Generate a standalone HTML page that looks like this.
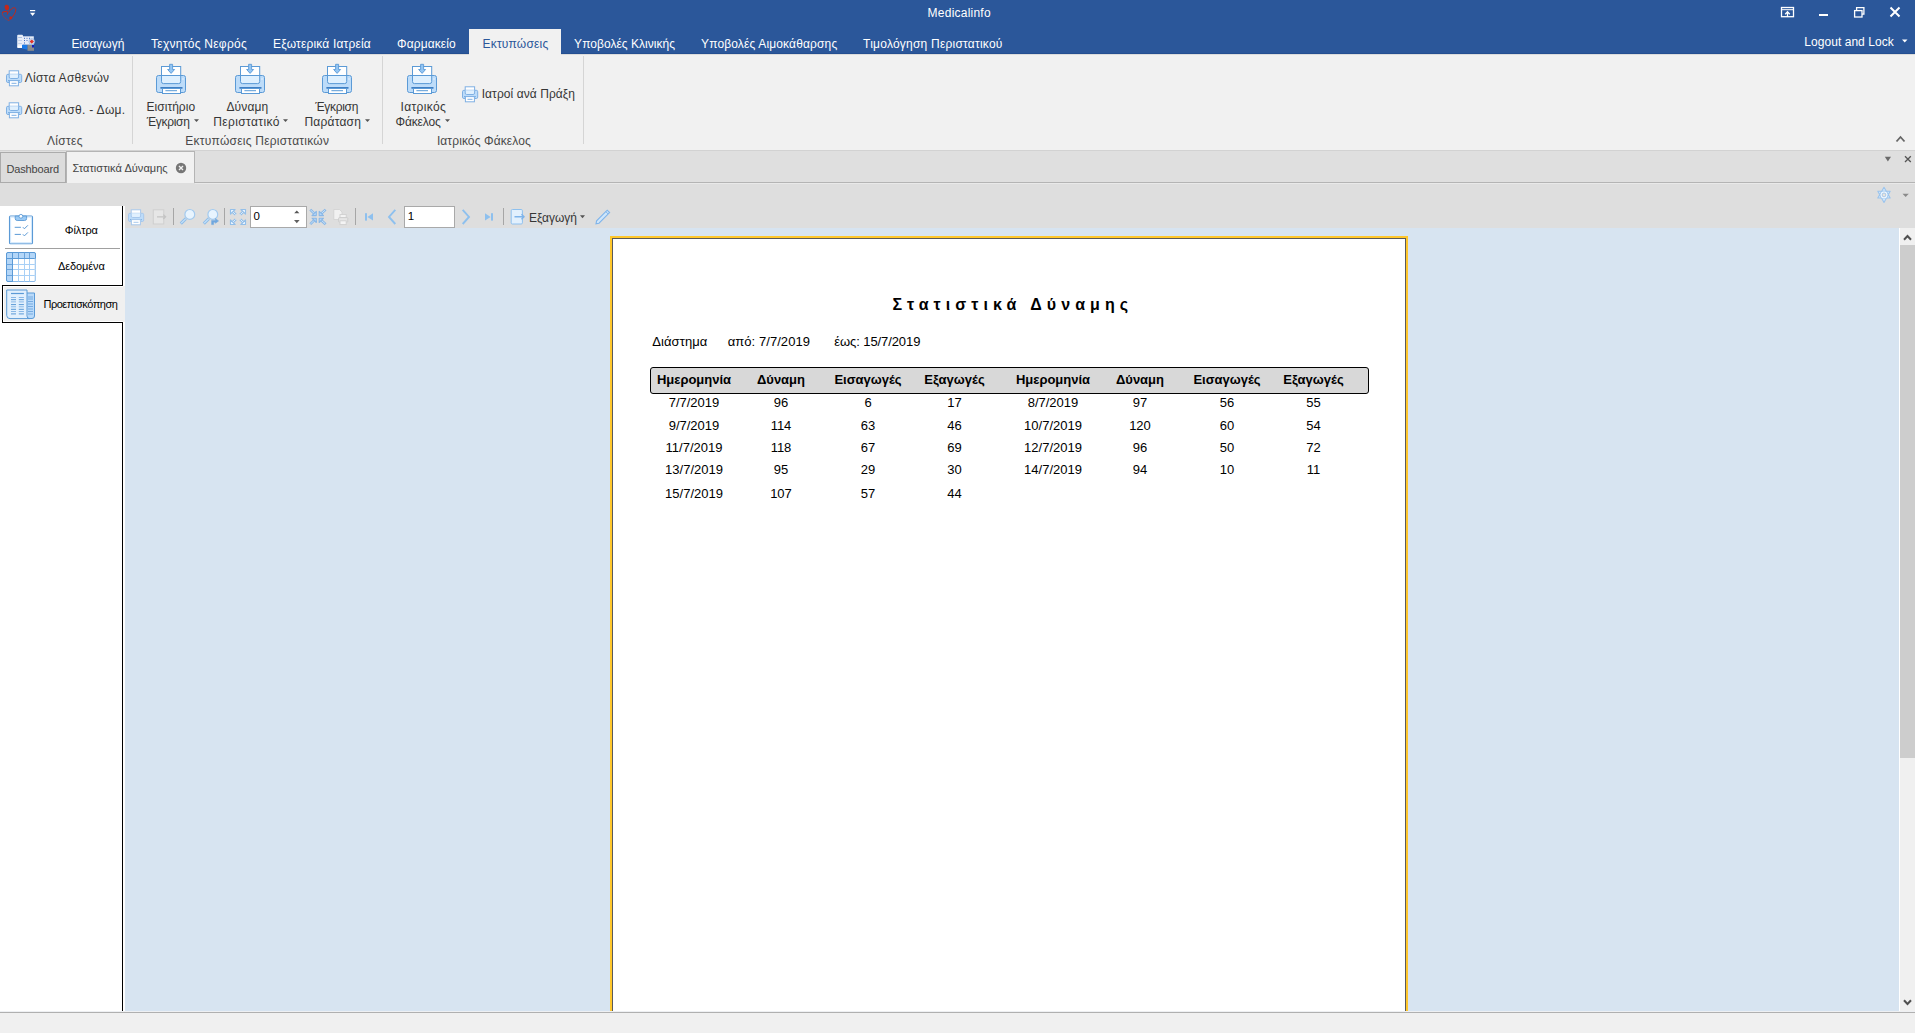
<!DOCTYPE html>
<html><head><meta charset="utf-8">
<style>
*{margin:0;padding:0;box-sizing:border-box}
html,body{width:1915px;height:1033px;overflow:hidden;background:#f0f0f0;font-family:"Liberation Sans",sans-serif;position:relative}
.a{position:absolute}
.t{position:absolute;white-space:pre;line-height:1}
svg{position:absolute;overflow:visible}
</style></head><body>
<!-- title bar -->
<div class="a" style="left:0;top:0;width:1915px;height:54px;background:#2b579a"></div>
<div class="a" style="left:0;top:53px;width:469px;height:1px;background:#244f91"></div>
<div class="a" style="left:561px;top:53px;width:1354px;height:1px;background:#244f91"></div>
<div class="a" style="left:469px;top:29px;width:92px;height:26px;background:#f1f1f1"></div>
<!-- ribbon -->
<div class="a" style="left:0;top:54px;width:1915px;height:96px;background:#f1f1f1"></div>
<div class="a" style="left:0;top:54px;width:469px;height:1px;background:#dcdcdc"></div>
<div class="a" style="left:561px;top:54px;width:1354px;height:1px;background:#dcdcdc"></div>
<div class="a" style="left:132px;top:56px;width:1px;height:88px;background:#d5d5d5"></div>
<div class="a" style="left:382px;top:56px;width:1px;height:88px;background:#d5d5d5"></div>
<div class="a" style="left:583px;top:56px;width:1px;height:88px;background:#d5d5d5"></div>
<div class="a" style="left:0;top:150px;width:1915px;height:1px;background:#d2d2d2"></div>
<!-- doc tab bar -->
<div class="a" style="left:0;top:151px;width:1915px;height:32px;background:#dfdfdf"></div>
<div class="a" style="left:0;top:182px;width:1915px;height:1px;background:#b4b4b4"></div>
<div class="a" style="left:0;top:152px;width:66px;height:31px;background:#dcdcdc;border:1px solid #ababab"></div>
<div class="a" style="left:66px;top:151px;width:129px;height:32px;background:#f1f1f1;border:1px solid #b4b4b4;border-bottom:none"></div>
<!-- band -->
<div class="a" style="left:0;top:183px;width:1915px;height:45px;background:#dedede"></div>
<div class="a" style="left:195px;top:183px;width:1720px;height:1px;background:#e9e9e9"></div>
<!-- left panel -->
<div class="a" style="left:0;top:206px;width:125px;height:806px;background:#fff"></div>
<div class="a" style="left:122px;top:206px;width:1px;height:79px;background:#000"></div>
<div class="a" style="left:122px;top:322px;width:1px;height:690px;background:#000"></div>
<div class="a" style="left:5px;top:248px;width:115px;height:1px;background:#a0a0a0"></div>
<div class="a" style="left:2px;top:285px;width:121px;height:38px;background:#f0f0f0;border:1px solid #000;border-right:none;box-shadow:inset 1px 1px 0 #fff,inset 0 -1px 0 #fff"></div>
<div class="a" style="left:123px;top:286px;width:2px;height:36px;background:#f0f0f0"></div>
<!-- preview area -->
<div class="a" style="left:125px;top:228px;width:1774px;height:783px;background:#d7e4f1"></div>
<div class="a" style="left:1899px;top:228px;width:1px;height:784px;background:#ffffff"></div>
<div class="a" style="left:1900px;top:228px;width:15px;height:784px;background:#f0f0f0"></div>
<div class="a" style="left:1900px;top:245px;width:15px;height:513px;background:#cdcdcd"></div>
<!-- page -->
<div class="a" style="left:610px;top:236px;width:798px;height:776px;background:#ffc72c"></div>
<div class="a" style="left:612px;top:238px;width:794px;height:774px;background:#fff;border:1px solid #5a5a5a;border-bottom:none"></div>
<div class="a" style="left:650px;top:367px;width:719px;height:27px;background:#d8d8d8;border:1px solid #000;border-radius:3px"></div>
<!-- status -->
<div class="a" style="left:0;top:1011px;width:1915px;height:1px;background:#eef0f3"></div>
<div class="a" style="left:0;top:1012px;width:1915px;height:1px;background:#b0b0b0"></div>
<div class="a" style="left:0;top:1013px;width:1915px;height:20px;background:#f0f0f0"></div>
<!-- spin box / page box -->
<div class="a" style="left:250px;top:206px;width:57px;height:22px;background:#fff;border:1px solid #a9a9a9"></div>
<div class="a" style="left:404px;top:206px;width:51px;height:22px;background:#fff;border:1px solid #a9a9a9"></div>
<svg style="left:0px;top:0px" width="20" height="24" viewBox="0 0 20 24">
<ellipse cx="6.9" cy="7.5" rx="2.2" ry="2.7" fill="#c0281c" transform="rotate(-12 6.9 7.5)"/>
<path d="M2.3 13.2 C2.2 11.8 4.2 11.2 7.2 11.4 M7.4 11.6 L7.4 14.6" fill="none" stroke="#c0281c" stroke-width="1.1"/>
<path d="M8.6 12.6 C10 9.8 12.6 7.4 14.6 7.6 C16.2 7.9 16 10.6 15 12.8 C13.8 15.4 11.6 18.2 9.2 20.4" fill="none" stroke="#c0281c" stroke-width="1"/>
<path d="M2.3 13.2 C2.4 15.6 4.2 17.6 6.2 19 C7.2 19.8 8.2 20.4 9.2 20.6" fill="none" stroke="#b8322a" stroke-width="0.9" opacity="0.75"/>
<circle cx="10.7" cy="17.7" r="1.5" fill="#c0281c"/>
</svg>
<svg style="left:29px;top:9px" width="8" height="8" viewBox="0 0 8 8"><rect x="1" y="1" width="5.2" height="1.2" fill="#fff"/><path d="M1 3.8 H6.2 L3.6 7 Z" fill="#fff"/></svg>
<svg style="left:17px;top:34px" width="18" height="18" viewBox="0 0 18 18">
<rect x="0.2" y="0.8" width="5.8" height="13.2" rx="1" fill="#e8eef8"/>
<rect x="1.2" y="3" width="3.8" height="0.8" fill="#9fb6dc"/><rect x="1.2" y="6" width="3.8" height="0.8" fill="#b8c8e6"/><rect x="1.2" y="9" width="3.8" height="0.8" fill="#b8c8e6"/>
<rect x="0.6" y="11.6" width="4.6" height="2.2" fill="#fff"/>
<rect x="5.8" y="2.3" width="11" height="8.4" fill="#e6ecf8"/>
<rect x="7" y="3.8" width="1" height="1" fill="#3a6bc0"/><rect x="9" y="3.8" width="2" height="1" fill="#9ab0dc"/><rect x="12" y="3.8" width="1" height="1" fill="#3a6bc0"/>
<rect x="7" y="6" width="1" height="1" fill="#3a6bc0"/><rect x="9" y="6" width="2" height="1" fill="#9ab0dc"/>
<rect x="7" y="8.5" width="1" height="1" fill="#3a6bc0"/>
<circle cx="14.8" cy="7.6" r="2.9" fill="#dbe8f8" stroke="#7aa6de" stroke-width="0.6"/><path d="M14.8 5.4 L17 7.6 L14.8 9.8 L12.6 7.6Z" fill="#e0342b"/>
<path d="M5 10.7 L10.5 10.9 L10.5 15.8 L5 14.5 Z" fill="#1a7ae8"/>
<rect x="10.5" y="11" width="6.5" height="5.8" fill="#8c8c8c"/><rect x="15" y="11" width="2" height="2.5" fill="#1020c0"/>
</svg>
<svg style="left:1780px;top:6px" width="16" height="13" viewBox="0 0 16 13"><rect x="1.5" y="1.5" width="12" height="9.2" fill="none" stroke="#fff" stroke-width="1.3"/><line x1="1.5" y1="3.7" x2="13.5" y2="3.7" stroke="#fff" stroke-width="1"/><path d="M7.5 11 V6.3 M5.2 8.3 L7.5 5.8 L9.8 8.3" fill="none" stroke="#fff" stroke-width="1.3"/></svg>
<div class="a" style="left:1819px;top:14px;width:9px;height:2px;background:#fff"></div>
<svg style="left:1853px;top:6px" width="13" height="13" viewBox="0 0 13 13"><rect x="1.6" y="4.6" width="7.4" height="6.4" fill="none" stroke="#fff" stroke-width="1.3"/><path d="M3.6 4.6 V1.6 H10.9 V8.2 H9" fill="none" stroke="#fff" stroke-width="1.3"/></svg>
<svg style="left:1889px;top:6px" width="13" height="13" viewBox="0 0 13 13"><path d="M1.5 1.5 L10.5 10.5 M10.5 1.5 L1.5 10.5" stroke="#fff" stroke-width="2"/></svg>
<svg style="left:1901px;top:39px" width="8" height="5" viewBox="0 0 8 5"><path d="M1 0.5 H6.5 L3.75 3.5Z" fill="#fff"/></svg>
<svg style="left:6px;top:70px" width="17" height="17" viewBox="0 0 17 17">
<rect x="3.2" y="0.8" width="9.4" height="4.6" fill="#fff" stroke="#7fb0e3"/>
<rect x="0.5" y="4.3" width="15.2" height="8.2" rx="1.4" fill="#bddcfa" stroke="#7fb0e3"/>
<path d="M3.2 4.3 V7 a1.5 1.5 0 0 0 1.5 1.5 H11.1 a1.5 1.5 0 0 0 1.5 -1.5 V4.3" fill="#e0f0fe" stroke="#7fb0e3"/>
<rect x="2" y="10.2" width="11.8" height="1" fill="#6aa3dc"/>
<rect x="3.4" y="10.6" width="9" height="5.2" fill="#fff" stroke="#7fb0e3"/>
<line x1="5.5" y1="13.3" x2="10.5" y2="13.3" stroke="#7fb0e3"/>
</svg>
<svg style="left:6px;top:102px" width="17" height="17" viewBox="0 0 17 17">
<rect x="3.2" y="0.8" width="9.4" height="4.6" fill="#fff" stroke="#7fb0e3"/>
<rect x="0.5" y="4.3" width="15.2" height="8.2" rx="1.4" fill="#bddcfa" stroke="#7fb0e3"/>
<path d="M3.2 4.3 V7 a1.5 1.5 0 0 0 1.5 1.5 H11.1 a1.5 1.5 0 0 0 1.5 -1.5 V4.3" fill="#e0f0fe" stroke="#7fb0e3"/>
<rect x="2" y="10.2" width="11.8" height="1" fill="#6aa3dc"/>
<rect x="3.4" y="10.6" width="9" height="5.2" fill="#fff" stroke="#7fb0e3"/>
<line x1="5.5" y1="13.3" x2="10.5" y2="13.3" stroke="#7fb0e3"/>
</svg>
<svg style="left:462px;top:86px" width="17" height="17" viewBox="0 0 17 17">
<rect x="3.2" y="0.8" width="9.4" height="4.6" fill="#fff" stroke="#7fb0e3"/>
<rect x="0.5" y="4.3" width="15.2" height="8.2" rx="1.4" fill="#bddcfa" stroke="#7fb0e3"/>
<path d="M3.2 4.3 V7 a1.5 1.5 0 0 0 1.5 1.5 H11.1 a1.5 1.5 0 0 0 1.5 -1.5 V4.3" fill="#e0f0fe" stroke="#7fb0e3"/>
<rect x="2" y="10.2" width="11.8" height="1" fill="#6aa3dc"/>
<rect x="3.4" y="10.6" width="9" height="5.2" fill="#fff" stroke="#7fb0e3"/>
<line x1="5.5" y1="13.3" x2="10.5" y2="13.3" stroke="#7fb0e3"/>
</svg>
<svg style="left:150px;top:58px" width="42" height="42" viewBox="0 0 42 42">
<rect x="6.5" y="17.5" width="29" height="17" rx="2" fill="#bddcf9" stroke="#5b9ad6"/>
<path d="M11.5 17.5 V23.6 a2 2 0 0 0 2 2 H28.7 a2 2 0 0 0 2 -2 V17.5" fill="#dff0fe" stroke="#5b9ad6"/>
<rect x="11.5" y="8.5" width="19.2" height="9" fill="#fff" stroke="#5b9ad6"/>
<path d="M19.6 6.3 H22.6 V11.5 H24.6 L21.1 15.4 L17.6 11.5 H19.6Z" fill="#94c6f4" stroke="#5b9ad6" stroke-width="0.9"/>
<rect x="10.2" y="29.1" width="22.5" height="1.7" rx="0.8" fill="#3f7fc4"/>
<rect x="12.5" y="30.5" width="18" height="5" fill="#fff" stroke="#5b9ad6"/>
<line x1="15.4" y1="32.7" x2="27" y2="32.7" stroke="#5b9ad6"/>
<circle cx="33" cy="21" r="0.8" fill="#e8f4ff"/>
</svg>
<svg style="left:229px;top:58px" width="42" height="42" viewBox="0 0 42 42">
<rect x="6.5" y="17.5" width="29" height="17" rx="2" fill="#bddcf9" stroke="#5b9ad6"/>
<path d="M11.5 17.5 V23.6 a2 2 0 0 0 2 2 H28.7 a2 2 0 0 0 2 -2 V17.5" fill="#dff0fe" stroke="#5b9ad6"/>
<rect x="11.5" y="8.5" width="19.2" height="9" fill="#fff" stroke="#5b9ad6"/>
<path d="M19.6 6.3 H22.6 V11.5 H24.6 L21.1 15.4 L17.6 11.5 H19.6Z" fill="#94c6f4" stroke="#5b9ad6" stroke-width="0.9"/>
<rect x="10.2" y="29.1" width="22.5" height="1.7" rx="0.8" fill="#3f7fc4"/>
<rect x="12.5" y="30.5" width="18" height="5" fill="#fff" stroke="#5b9ad6"/>
<line x1="15.4" y1="32.7" x2="27" y2="32.7" stroke="#5b9ad6"/>
<circle cx="33" cy="21" r="0.8" fill="#e8f4ff"/>
</svg>
<svg style="left:316px;top:58px" width="42" height="42" viewBox="0 0 42 42">
<rect x="6.5" y="17.5" width="29" height="17" rx="2" fill="#bddcf9" stroke="#5b9ad6"/>
<path d="M11.5 17.5 V23.6 a2 2 0 0 0 2 2 H28.7 a2 2 0 0 0 2 -2 V17.5" fill="#dff0fe" stroke="#5b9ad6"/>
<rect x="11.5" y="8.5" width="19.2" height="9" fill="#fff" stroke="#5b9ad6"/>
<path d="M19.6 6.3 H22.6 V11.5 H24.6 L21.1 15.4 L17.6 11.5 H19.6Z" fill="#94c6f4" stroke="#5b9ad6" stroke-width="0.9"/>
<rect x="10.2" y="29.1" width="22.5" height="1.7" rx="0.8" fill="#3f7fc4"/>
<rect x="12.5" y="30.5" width="18" height="5" fill="#fff" stroke="#5b9ad6"/>
<line x1="15.4" y1="32.7" x2="27" y2="32.7" stroke="#5b9ad6"/>
<circle cx="33" cy="21" r="0.8" fill="#e8f4ff"/>
</svg>
<svg style="left:401px;top:58px" width="42" height="42" viewBox="0 0 42 42">
<rect x="6.5" y="17.5" width="29" height="17" rx="2" fill="#bddcf9" stroke="#5b9ad6"/>
<path d="M11.5 17.5 V23.6 a2 2 0 0 0 2 2 H28.7 a2 2 0 0 0 2 -2 V17.5" fill="#dff0fe" stroke="#5b9ad6"/>
<rect x="11.5" y="8.5" width="19.2" height="9" fill="#fff" stroke="#5b9ad6"/>
<path d="M19.6 6.3 H22.6 V11.5 H24.6 L21.1 15.4 L17.6 11.5 H19.6Z" fill="#94c6f4" stroke="#5b9ad6" stroke-width="0.9"/>
<rect x="10.2" y="29.1" width="22.5" height="1.7" rx="0.8" fill="#3f7fc4"/>
<rect x="12.5" y="30.5" width="18" height="5" fill="#fff" stroke="#5b9ad6"/>
<line x1="15.4" y1="32.7" x2="27" y2="32.7" stroke="#5b9ad6"/>
<circle cx="33" cy="21" r="0.8" fill="#e8f4ff"/>
</svg>
<svg style="left:194.4px;top:119px" width="6" height="4" viewBox="0 0 6 4"><path d="M0 0.3 H5 L2.5 3Z" fill="#555"/></svg>
<svg style="left:283.2px;top:119px" width="6" height="4" viewBox="0 0 6 4"><path d="M0 0.3 H5 L2.5 3Z" fill="#555"/></svg>
<svg style="left:365.4px;top:119px" width="6" height="4" viewBox="0 0 6 4"><path d="M0 0.3 H5 L2.5 3Z" fill="#555"/></svg>
<svg style="left:445.3px;top:119px" width="6" height="4" viewBox="0 0 6 4"><path d="M0 0.3 H5 L2.5 3Z" fill="#555"/></svg>
<svg style="left:1895px;top:134px" width="12" height="10" viewBox="0 0 12 10"><path d="M1.5 7.5 L5.5 3 L9.5 7.5" fill="none" stroke="#666" stroke-width="1.8"/></svg>
<svg style="left:175px;top:162px" width="12" height="12" viewBox="0 0 12 12"><circle cx="6" cy="6" r="5.2" fill="#767676"/><path d="M4 4 L8 8 M8 4 L4 8" stroke="#f1f1f1" stroke-width="1.4"/></svg>
<svg style="left:1884px;top:156px" width="8" height="6" viewBox="0 0 8 6"><path d="M0.8 0.8 H7 L3.9 5.5Z" fill="#6b6b6b"/></svg>
<svg style="left:1904px;top:155px" width="8" height="8" viewBox="0 0 8 8"><path d="M1 1.2 L6.8 7 M6.8 1.2 L1 7" stroke="#555" stroke-width="1.3"/></svg>
<svg style="left:1872px;top:184px" width="24" height="22" viewBox="0 0 24 22">
<path d="M12 3.3 L18.2 14 L5.8 14 Z M12 18.5 L5.8 7.2 L18.2 7.2 Z" fill="#cfe7fd" stroke="#9cc4ec" stroke-width="1.1" stroke-linejoin="round"/>
<circle cx="12" cy="10.9" r="3.4" fill="#eef7ff"/>
<rect x="10.3" y="9.2" width="3.4" height="3.4" rx="1.2" fill="#e8e4dc" stroke="#a0c2e6" stroke-width="1"/>
</svg>
<svg style="left:1902px;top:193px" width="8" height="5" viewBox="0 0 8 5"><path d="M0.5 0.8 H6.8 L3.65 4Z" fill="#8a8a8a"/></svg>
<svg style="left:1902px;top:233px" width="11" height="9" viewBox="0 0 11 9"><path d="M2 6.8 L5.5 3 L9 6.8" fill="none" stroke="#505050" stroke-width="2"/></svg>
<svg style="left:1902px;top:998px" width="11" height="9" viewBox="0 0 11 9"><path d="M2 2.2 L5.5 6 L9 2.2" fill="none" stroke="#505050" stroke-width="2"/></svg>
<svg style="left:4px;top:210px" width="36" height="38" viewBox="0 0 36 38">
<rect x="5.5" y="6" width="23" height="27.8" rx="1" fill="#fff" stroke="#5b9ad6" stroke-width="1.1"/>
<rect x="6.6" y="7.1" width="20.8" height="25.6" fill="none" stroke="#cfe6fc" stroke-width="1"/>
<path d="M11.2 6 H22.6 V8.5 a2 2 0 0 1 -2 2 H13.2 a2 2 0 0 1 -2 -2Z" fill="#9ccbf5" stroke="#5b9ad6" stroke-width="0.9"/>
<circle cx="16.9" cy="6.3" r="1.9" fill="#fff" stroke="#5b9ad6" stroke-width="0.9"/>
<line x1="10.7" y1="17.3" x2="16.9" y2="17.3" stroke="#5b9ad6" stroke-width="1"/>
<line x1="10.7" y1="24.4" x2="16.9" y2="24.4" stroke="#5b9ad6" stroke-width="1"/>
<path d="M18.9 17.2 L20.4 18.8 L23.9 15.3 M18.9 24.3 L20.4 25.9 L23.9 22.4" fill="none" stroke="#5b9ad6" stroke-width="1"/>
</svg>
<svg style="left:6px;top:252px" width="31" height="31" viewBox="0 0 31 31"><rect x="0.5" y="0.5" width="29" height="29" rx="1.5" fill="#fff" stroke="#8cbbe9"/><path d="M0.5 2 a1.5 1.5 0 0 1 1.5 -1.5 H28 a1.5 1.5 0 0 1 1.5 1.5 V6.5 H6.5 V29.5 H2 a1.5 1.5 0 0 1 -1.5 -1.5Z" fill="#b3d6f8" stroke="#5b9ad6"/><line x1="12.5" y1="6.5" x2="12.5" y2="29.5" stroke="#a8d0f6" stroke-width="1"/><line x1="12.5" y1="0.5" x2="12.5" y2="6.5" stroke="#6aa3dc" stroke-width="1"/><line x1="18.5" y1="6.5" x2="18.5" y2="29.5" stroke="#a8d0f6" stroke-width="1"/><line x1="18.5" y1="0.5" x2="18.5" y2="6.5" stroke="#6aa3dc" stroke-width="1"/><line x1="23.5" y1="6.5" x2="23.5" y2="29.5" stroke="#a8d0f6" stroke-width="1"/><line x1="23.5" y1="0.5" x2="23.5" y2="6.5" stroke="#6aa3dc" stroke-width="1"/><line x1="6.5" y1="12.5" x2="29.5" y2="12.5" stroke="#a8d0f6" stroke-width="1"/><line x1="0.5" y1="12.5" x2="6.5" y2="12.5" stroke="#6aa3dc" stroke-width="1"/><line x1="6.5" y1="17.5" x2="29.5" y2="17.5" stroke="#a8d0f6" stroke-width="1"/><line x1="0.5" y1="17.5" x2="6.5" y2="17.5" stroke="#6aa3dc" stroke-width="1"/><line x1="6.5" y1="23.5" x2="29.5" y2="23.5" stroke="#a8d0f6" stroke-width="1"/><line x1="0.5" y1="23.5" x2="6.5" y2="23.5" stroke="#6aa3dc" stroke-width="1"/><line x1="6.5" y1="0.5" x2="6.5" y2="29.5" stroke="#5b9ad6"/><line x1="0.5" y1="6.5" x2="29.5" y2="6.5" stroke="#5b9ad6"/><line x1="29" y1="6.5" x2="29" y2="29" stroke="#c0dcf6" stroke-width="1"/></svg>
<svg style="left:6px;top:289px" width="31" height="32" viewBox="0 0 31 32">
<path d="M20 4 H28.5 V27 a2.5 2.5 0 0 1 -2.5 2.5 H22" fill="#b9dafa" stroke="#5b9ad6"/>
<path d="M0.7 1 H21 V27 a2.6 2.6 0 0 0 2.6 2.6 H4 a3.3 3.3 0 0 1 -3.3 -3.3Z" fill="#e2f0fd" stroke="#5b9ad6"/>
<line x1="5" y1="4.5" x2="17.9" y2="4.5" stroke="#5b9ad6" stroke-width="1.2"/>
<line x1="5" y1="8.5" x2="10" y2="8.5" stroke="#8ab8e6" stroke-width="1"/><line x1="12.8" y1="8.5" x2="17.9" y2="8.5" stroke="#8ab8e6" stroke-width="1"/><line x1="5" y1="10.7" x2="10" y2="10.7" stroke="#5b9ad6" stroke-width="1"/><line x1="12.8" y1="10.7" x2="17.9" y2="10.7" stroke="#5b9ad6" stroke-width="1"/><line x1="5" y1="12.9" x2="10" y2="12.9" stroke="#8ab8e6" stroke-width="1"/><line x1="12.8" y1="12.9" x2="17.9" y2="12.9" stroke="#8ab8e6" stroke-width="1"/><line x1="5" y1="15.6" x2="10" y2="15.6" stroke="#5b9ad6" stroke-width="1"/><line x1="12.8" y1="15.6" x2="17.9" y2="15.6" stroke="#5b9ad6" stroke-width="1"/><line x1="5" y1="17.8" x2="10" y2="17.8" stroke="#8ab8e6" stroke-width="1"/><line x1="12.8" y1="17.8" x2="17.9" y2="17.8" stroke="#8ab8e6" stroke-width="1"/><line x1="5" y1="20.3" x2="10" y2="20.3" stroke="#5b9ad6" stroke-width="1"/><line x1="12.8" y1="20.3" x2="17.9" y2="20.3" stroke="#5b9ad6" stroke-width="1"/><line x1="5" y1="22.5" x2="10" y2="22.5" stroke="#8ab8e6" stroke-width="1"/><line x1="12.8" y1="22.5" x2="17.9" y2="22.5" stroke="#8ab8e6" stroke-width="1"/><line x1="5" y1="24.9" x2="10" y2="24.9" stroke="#5b9ad6" stroke-width="1"/><line x1="12.8" y1="24.9" x2="17.9" y2="24.9" stroke="#5b9ad6" stroke-width="1"/><line x1="22" y1="8" x2="27" y2="8" stroke="#6fa6de" stroke-width="0.9"/><line x1="22" y1="10" x2="27" y2="10" stroke="#6fa6de" stroke-width="0.9"/><line x1="22" y1="12.5" x2="27" y2="12.5" stroke="#6fa6de" stroke-width="0.9"/><line x1="22" y1="15" x2="27" y2="15" stroke="#6fa6de" stroke-width="0.9"/><line x1="22" y1="17.5" x2="27" y2="17.5" stroke="#6fa6de" stroke-width="0.9"/><line x1="22" y1="20" x2="27" y2="20" stroke="#6fa6de" stroke-width="0.9"/><line x1="22" y1="22.5" x2="27" y2="22.5" stroke="#6fa6de" stroke-width="0.9"/><line x1="22" y1="25" x2="27" y2="25" stroke="#6fa6de" stroke-width="0.9"/></svg>
<svg style="left:127.5px;top:208.5px" width="17" height="17" viewBox="0 0 17 17">
<rect x="3.2" y="0.8" width="9.4" height="4.6" fill="#fff" stroke="#a8c8ec"/>
<rect x="0.5" y="4.3" width="15.2" height="8.2" rx="1.4" fill="#bddcfa" stroke="#a8c8ec"/>
<path d="M3.2 4.3 V7 a1.5 1.5 0 0 0 1.5 1.5 H11.1 a1.5 1.5 0 0 0 1.5 -1.5 V4.3" fill="#e0f0fe" stroke="#a8c8ec"/>
<rect x="2" y="10.2" width="11.8" height="1" fill="#6aa3dc"/>
<rect x="3.4" y="10.6" width="9" height="5.2" fill="#fff" stroke="#a8c8ec"/>
<line x1="5.5" y1="13.3" x2="10.5" y2="13.3" stroke="#a8c8ec"/>
</svg>
<svg style="left:152px;top:208px" width="16" height="18" viewBox="0 0 16 18"><rect x="1.3" y="1.8" width="10.5" height="14.2" fill="#e6e6e6" stroke="#cfcfcf"/><path d="M5 8.8 H13.5 M11.3 6.6 L13.6 8.8 L11.3 11" fill="none" stroke="#c4c4c4" stroke-width="1.3"/></svg>
<div class="a" style="left:173px;top:208px;width:1px;height:17px;background:#a6a6a6"></div>
<div class="a" style="left:224px;top:208px;width:1px;height:17px;background:#a6a6a6"></div>
<div class="a" style="left:355px;top:208px;width:1px;height:17px;background:#a6a6a6"></div>
<div class="a" style="left:503px;top:208px;width:1px;height:17px;background:#a6a6a6"></div>
<svg style="left:178.5px;top:208px" width="18" height="18" viewBox="0 0 18 18"><line x1="1.8" y1="15.6" x2="6.8" y2="10.6" stroke="#8fbde9" stroke-width="3"/><line x1="2.2" y1="15.2" x2="6.6" y2="10.8" stroke="#c6e2fb" stroke-width="1.2"/><circle cx="10.8" cy="6.4" r="4.9" fill="#e8f4fe" stroke="#a3caef" stroke-width="1.2"/></svg>
<svg style="left:201.5px;top:208px" width="18" height="18" viewBox="0 0 18 18"><line x1="1.8" y1="15.6" x2="6.8" y2="10.6" stroke="#8fbde9" stroke-width="3"/><line x1="2.2" y1="15.2" x2="6.6" y2="10.8" stroke="#c6e2fb" stroke-width="1.2"/><circle cx="10.8" cy="6.4" r="4.9" fill="#e8f4fe" stroke="#a3caef" stroke-width="1.2"/><path d="M9.6 16.6 V12.4 H13.4 V10.5 L16.6 12.9 L13.4 15.3 V14.2 H11.6 V16.6Z" fill="#6fa7df" stroke="#6fa7df" stroke-width="0.5" stroke-linejoin="round"/></svg>
<svg style="left:226px;top:206px" width="24" height="22" viewBox="0 0 24 22"><line x1="6.0" y1="5.0" x2="9.7" y2="8.7" stroke="#93bfe9" stroke-width="2.6"/><line x1="6.0" y1="5.0" x2="9.5" y2="8.5" stroke="#e6f3fe" stroke-width="0.9"/><path d="M4.5 3.5 H9.1 L4.5 8.1 Z" fill="#eef7ff" stroke="#93bfe9" stroke-width="1.2" stroke-linejoin="round"/><line x1="18.0" y1="5.0" x2="14.3" y2="8.7" stroke="#93bfe9" stroke-width="2.6"/><line x1="18.0" y1="5.0" x2="14.5" y2="8.5" stroke="#e6f3fe" stroke-width="0.9"/><path d="M19.5 3.5 H14.9 L19.5 8.1 Z" fill="#eef7ff" stroke="#93bfe9" stroke-width="1.2" stroke-linejoin="round"/><line x1="6.0" y1="17.0" x2="9.7" y2="13.3" stroke="#93bfe9" stroke-width="2.6"/><line x1="6.0" y1="17.0" x2="9.5" y2="13.5" stroke="#e6f3fe" stroke-width="0.9"/><path d="M4.5 18.5 H9.1 L4.5 13.9 Z" fill="#eef7ff" stroke="#93bfe9" stroke-width="1.2" stroke-linejoin="round"/><line x1="18.0" y1="17.0" x2="14.3" y2="13.3" stroke="#93bfe9" stroke-width="2.6"/><line x1="18.0" y1="17.0" x2="14.5" y2="13.5" stroke="#e6f3fe" stroke-width="0.9"/><path d="M19.5 18.5 H14.9 L19.5 13.9 Z" fill="#eef7ff" stroke="#93bfe9" stroke-width="1.2" stroke-linejoin="round"/></svg>
<svg style="left:306px;top:206px" width="24" height="22" viewBox="0 0 24 22"><line x1="4.3" y1="3.6" x2="8.3" y2="7.6" stroke="#8ab8e6" stroke-width="2.6"/><line x1="4.8" y1="4.1" x2="8.3" y2="7.6" stroke="#cfe6fc" stroke-width="0.9"/><path d="M10.3 9.6 V5.3 L6.000000000000001 9.6 Z" fill="#b3d6fb" stroke="#8ab8e6" stroke-width="1.1" stroke-linejoin="round"/><line x1="19.6" y1="3.6" x2="15.2" y2="7.6" stroke="#8ab8e6" stroke-width="2.6"/><line x1="19.1" y1="4.1" x2="15.2" y2="7.6" stroke="#cfe6fc" stroke-width="0.9"/><path d="M13.2 9.6 V5.3 L17.5 9.6 Z" fill="#b3d6fb" stroke="#8ab8e6" stroke-width="1.1" stroke-linejoin="round"/><line x1="4.3" y1="18.2" x2="8.3" y2="14.2" stroke="#8ab8e6" stroke-width="2.6"/><line x1="4.8" y1="17.7" x2="8.3" y2="14.2" stroke="#cfe6fc" stroke-width="0.9"/><path d="M10.3 12.2 V16.5 L6.000000000000001 12.2 Z" fill="#b3d6fb" stroke="#8ab8e6" stroke-width="1.1" stroke-linejoin="round"/><line x1="19.6" y1="18.2" x2="15.2" y2="14.2" stroke="#8ab8e6" stroke-width="2.6"/><line x1="19.1" y1="17.7" x2="15.2" y2="14.2" stroke="#cfe6fc" stroke-width="0.9"/><path d="M13.2 12.2 V16.5 L17.5 12.2 Z" fill="#b3d6fb" stroke="#8ab8e6" stroke-width="1.1" stroke-linejoin="round"/></svg>
<svg style="left:306px;top:206px" width="46" height="22" viewBox="0 0 46 22"><path d="M27.8 3.5 H33.6 L36 6 V13.5 H27.8Z" fill="#f1f1f1" stroke="#d4d4d4" stroke-width="0.9"/><rect x="34" y="8.6" width="6.2" height="3.2" fill="#f4f4f4" stroke="#cfcfcf" stroke-width="0.9"/><rect x="32.6" y="11.6" width="9.2" height="4.6" rx="0.8" fill="#e6e6e6" stroke="#cccccc" stroke-width="0.9"/><rect x="34" y="14.8" width="6.2" height="3.8" fill="#f4f4f4" stroke="#cfcfcf" stroke-width="0.9"/></svg>
<svg style="left:364px;top:212px" width="10" height="10" viewBox="0 0 10 10"><rect x="1" y="1.2" width="2" height="7.4" fill="#8ec0ee"/><path d="M9 1.2 V8.6 L3.4 4.9Z" fill="#8ec0ee"/></svg>
<svg style="left:386px;top:208px" width="12" height="18" viewBox="0 0 12 18"><path d="M9.3 1.8 L3 8.9 L9.3 16" fill="none" stroke="#8ec0ee" stroke-width="1.9"/></svg>
<svg style="left:460px;top:208px" width="12" height="18" viewBox="0 0 12 18"><path d="M2.7 1.8 L9 8.9 L2.7 16" fill="none" stroke="#8ec0ee" stroke-width="1.9"/></svg>
<svg style="left:484px;top:212px" width="10" height="10" viewBox="0 0 10 10"><rect x="7" y="1.2" width="2" height="7.4" fill="#8ec0ee"/><path d="M1 1.2 V8.6 L6.6 4.9Z" fill="#8ec0ee"/></svg>
<svg style="left:292px;top:209px" width="9" height="16" viewBox="0 0 9 16"><path d="M2.2 4.2 H7.4 L4.8 1.4Z" fill="#555"/><path d="M2 11.1 H7.6 L4.8 14.3Z" fill="#606060"/></svg>
<svg style="left:510px;top:208px" width="16" height="18" viewBox="0 0 16 18"><rect x="1.2" y="1.5" width="11.2" height="14.5" rx="1.2" fill="#e2f0fd" stroke="#8ec0ee"/><path d="M4.5 8.8 H13.8 M11.5 6.3 L14 8.8 L11.5 11.3" fill="none" stroke="#7fb4ea" stroke-width="1.4"/></svg>
<svg style="left:579.5px;top:215px" width="6" height="4" viewBox="0 0 6 4"><path d="M0 0.3 H5 L2.5 3.2Z" fill="#555"/></svg>
<svg style="left:594px;top:208px" width="18" height="18" viewBox="0 0 18 18"><path d="M2 15.8 L2.6 12.8 L13.2 2.2 L15.6 4.6 L5 15.2 Z" fill="#cfe6fb" stroke="#7fb4ea" stroke-width="1.1"/><line x1="11.8" y1="3.6" x2="14.2" y2="6" stroke="#7fb4ea"/></svg><div class="t" style="left:927.60px;top:6.84px;font-size:12px;color:#fff;letter-spacing:0.232px">Medicalinfo</div>
<div class="t" style="left:71.40px;top:37.84px;font-size:12px;color:#fff;letter-spacing:-0.020px">Εισαγωγή</div>
<div class="t" style="left:151.00px;top:37.84px;font-size:12px;color:#fff;letter-spacing:0.269px">Τεχνητός Νεφρός</div>
<div class="t" style="left:273.00px;top:37.84px;font-size:12px;color:#fff;letter-spacing:0.165px">Εξωτερικά Ιατρεία</div>
<div class="t" style="left:397.00px;top:37.84px;font-size:12px;color:#fff;letter-spacing:0.104px">Φαρμακείο</div>
<div class="t" style="left:482.50px;top:37.84px;font-size:12px;color:#2b579a;letter-spacing:0.191px">Εκτυπώσεις</div>
<div class="t" style="left:574.10px;top:37.84px;font-size:12px;color:#fff;letter-spacing:0.038px">Υποβολές Κλινικής</div>
<div class="t" style="left:701.00px;top:37.84px;font-size:12px;color:#fff;letter-spacing:0.146px">Υποβολές Αιμοκάθαρσης</div>
<div class="t" style="left:863.10px;top:37.84px;font-size:12px;color:#fff;letter-spacing:0.223px">Τιμολόγηση Περιστατικού</div>
<div class="t" style="left:1804.30px;top:35.84px;font-size:12px;color:#fff;letter-spacing:0.048px">Logout and Lock</div>
<div class="t" style="left:24.70px;top:71.84px;font-size:12px;color:#363636;letter-spacing:0.278px">Λίστα Ασθενών</div>
<div class="t" style="left:24.70px;top:103.84px;font-size:12px;color:#363636;letter-spacing:0.324px">Λίστα Ασθ. - Δωμ.</div>
<div class="t" style="left:47.00px;top:134.84px;font-size:12px;color:#4a4a4a;letter-spacing:0.310px">Λίστες</div>
<div class="t" style="left:146.50px;top:100.84px;font-size:12px;color:#363636;letter-spacing:0.036px">Εισιτήριο</div>
<div class="t" style="left:146.70px;top:115.84px;font-size:12px;color:#363636;letter-spacing:-0.294px">Έγκριση</div>
<div class="t" style="left:226.40px;top:100.84px;font-size:12px;color:#363636;letter-spacing:0.142px">Δύναμη</div>
<div class="t" style="left:213.30px;top:115.84px;font-size:12px;color:#363636;letter-spacing:0.366px">Περιστατικό</div>
<div class="t" style="left:315.20px;top:100.84px;font-size:12px;color:#363636;letter-spacing:-0.311px">Έγκριση</div>
<div class="t" style="left:304.50px;top:115.84px;font-size:12px;color:#363636;letter-spacing:0.207px">Παράταση</div>
<div class="t" style="left:185.30px;top:134.84px;font-size:12px;color:#4a4a4a;letter-spacing:0.238px">Εκτυπώσεις Περιστατικών</div>
<div class="t" style="left:400.50px;top:100.84px;font-size:12px;color:#363636;letter-spacing:0.342px">Ιατρικός</div>
<div class="t" style="left:395.50px;top:115.84px;font-size:12px;color:#363636;letter-spacing:-0.153px">Φάκελος</div>
<div class="t" style="left:481.70px;top:87.54px;font-size:12px;color:#363636;letter-spacing:0.074px">Ιατροί ανά Πράξη</div>
<div class="t" style="left:436.90px;top:134.84px;font-size:12px;color:#4a4a4a;letter-spacing:0.102px">Ιατρικός Φάκελος</div>
<div class="t" style="left:6.50px;top:163.79px;font-size:11px;color:#444;letter-spacing:-0.146px">Dashboard</div>
<div class="t" style="left:72.50px;top:162.89px;font-size:11px;color:#444;letter-spacing:0.048px">Στατιστικά Δύναμης</div>
<div class="t" style="left:64.80px;top:224.69px;font-size:11px;color:#000;letter-spacing:-0.106px">Φίλτρα</div>
<div class="t" style="left:58.00px;top:261.19px;font-size:11px;color:#000;letter-spacing:-0.119px">Δεδομένα</div>
<div class="t" style="left:43.40px;top:299.09px;font-size:11px;color:#000;letter-spacing:-0.453px">Προεπισκόπηση</div>
<div class="t" style="left:253.50px;top:210.87px;font-size:11.5px;color:#000">0</div>
<div class="t" style="left:407.80px;top:210.87px;font-size:11.5px;color:#000">1</div>
<div class="t" style="left:529.00px;top:212.44px;font-size:12px;color:#363636">Εξαγωγή</div>
<div class="t" style="left:892.50px;top:297.46px;font-size:16px;color:#000;font-weight:bold;letter-spacing:5.063px">Στατιστικά Δύναμης</div>
<div class="t" style="left:652.20px;top:334.60px;font-size:13px;color:#000;letter-spacing:0.099px">Διάστημα</div>
<div class="t" style="left:727.70px;top:334.60px;font-size:13px;color:#000;letter-spacing:0.061px">από: 7/7/2019</div>
<div class="t" style="left:834.30px;top:334.60px;font-size:13px;color:#000;letter-spacing:-0.092px">έως: 15/7/2019</div>
<div class="t" style="left:656.88px;top:373.00px;font-size:13px;color:#000;font-weight:bold">Ημερομηνία</div>
<div class="t" style="left:756.98px;top:373.00px;font-size:13px;color:#000;font-weight:bold">Δύναμη</div>
<div class="t" style="left:834.38px;top:373.00px;font-size:13px;color:#000;font-weight:bold">Εισαγωγές</div>
<div class="t" style="left:924.31px;top:373.00px;font-size:13px;color:#000;font-weight:bold">Εξαγωγές</div>
<div class="t" style="left:1015.88px;top:373.00px;font-size:13px;color:#000;font-weight:bold">Ημερομηνία</div>
<div class="t" style="left:1115.98px;top:373.00px;font-size:13px;color:#000;font-weight:bold">Δύναμη</div>
<div class="t" style="left:1193.38px;top:373.00px;font-size:13px;color:#000;font-weight:bold">Εισαγωγές</div>
<div class="t" style="left:1283.31px;top:373.00px;font-size:13px;color:#000;font-weight:bold">Εξαγωγές</div>
<div class="t" style="left:668.70px;top:395.80px;font-size:13px;color:#000">7/7/2019</div>
<div class="t" style="left:773.77px;top:395.80px;font-size:13px;color:#000">96</div>
<div class="t" style="left:864.38px;top:395.80px;font-size:13px;color:#000">6</div>
<div class="t" style="left:947.27px;top:395.80px;font-size:13px;color:#000">17</div>
<div class="t" style="left:1027.70px;top:395.80px;font-size:13px;color:#000">8/7/2019</div>
<div class="t" style="left:1132.77px;top:395.80px;font-size:13px;color:#000">97</div>
<div class="t" style="left:1219.77px;top:395.80px;font-size:13px;color:#000">56</div>
<div class="t" style="left:1306.27px;top:395.80px;font-size:13px;color:#000">55</div>
<div class="t" style="left:668.70px;top:418.70px;font-size:13px;color:#000">9/7/2019</div>
<div class="t" style="left:770.63px;top:418.70px;font-size:13px;color:#000">114</div>
<div class="t" style="left:860.77px;top:418.70px;font-size:13px;color:#000">63</div>
<div class="t" style="left:947.27px;top:418.70px;font-size:13px;color:#000">46</div>
<div class="t" style="left:1024.08px;top:418.70px;font-size:13px;color:#000">10/7/2019</div>
<div class="t" style="left:1129.15px;top:418.70px;font-size:13px;color:#000">120</div>
<div class="t" style="left:1219.77px;top:418.70px;font-size:13px;color:#000">60</div>
<div class="t" style="left:1306.27px;top:418.70px;font-size:13px;color:#000">54</div>
<div class="t" style="left:665.56px;top:440.60px;font-size:13px;color:#000">11/7/2019</div>
<div class="t" style="left:770.63px;top:440.60px;font-size:13px;color:#000">118</div>
<div class="t" style="left:860.77px;top:440.60px;font-size:13px;color:#000">67</div>
<div class="t" style="left:947.27px;top:440.60px;font-size:13px;color:#000">69</div>
<div class="t" style="left:1024.08px;top:440.60px;font-size:13px;color:#000">12/7/2019</div>
<div class="t" style="left:1132.77px;top:440.60px;font-size:13px;color:#000">96</div>
<div class="t" style="left:1219.77px;top:440.60px;font-size:13px;color:#000">50</div>
<div class="t" style="left:1306.27px;top:440.60px;font-size:13px;color:#000">72</div>
<div class="t" style="left:665.08px;top:463.20px;font-size:13px;color:#000">13/7/2019</div>
<div class="t" style="left:773.77px;top:463.20px;font-size:13px;color:#000">95</div>
<div class="t" style="left:860.77px;top:463.20px;font-size:13px;color:#000">29</div>
<div class="t" style="left:947.27px;top:463.20px;font-size:13px;color:#000">30</div>
<div class="t" style="left:1024.08px;top:463.20px;font-size:13px;color:#000">14/7/2019</div>
<div class="t" style="left:1132.77px;top:463.20px;font-size:13px;color:#000">94</div>
<div class="t" style="left:1219.77px;top:463.20px;font-size:13px;color:#000">10</div>
<div class="t" style="left:1306.75px;top:463.20px;font-size:13px;color:#000">11</div>
<div class="t" style="left:665.08px;top:486.50px;font-size:13px;color:#000">15/7/2019</div>
<div class="t" style="left:770.15px;top:486.50px;font-size:13px;color:#000">107</div>
<div class="t" style="left:860.77px;top:486.50px;font-size:13px;color:#000">57</div>
<div class="t" style="left:947.27px;top:486.50px;font-size:13px;color:#000">44</div></body></html>
